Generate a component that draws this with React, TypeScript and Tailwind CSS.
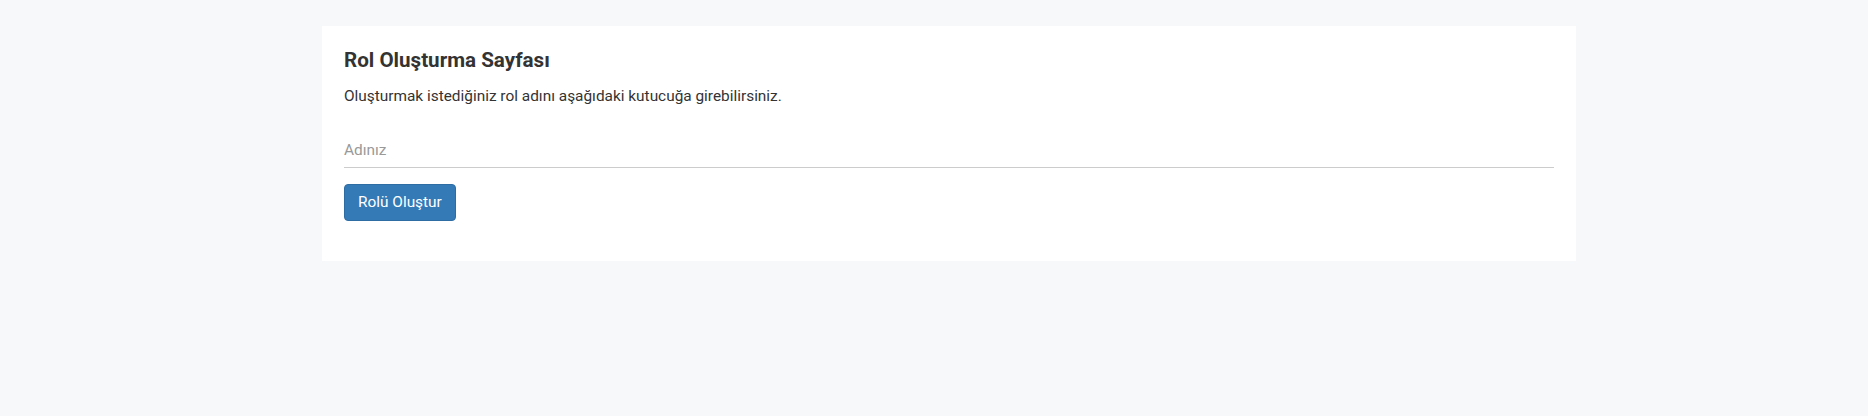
export default function App() {
  return (
    <div className="min-h-[416px] w-full bg-[#f7f8fa] pt-[26px] font-['Roboto',sans-serif] text-[#333]">
      <div className="ml-[322px] w-[1254px] bg-white px-[22px] pt-[20px] pb-[40px]">
        <h1 className="text-[20.6px] font-bold leading-[28px] text-[#333]">Rol Oluşturma Sayfası</h1>
        <p className="mt-[12px] text-[15.4px] leading-[20px]">
          Oluşturmak istediğiniz rol adını aşağıdaki kutucuğa girebilirsiniz.
        </p>
        <input
          type="text"
          placeholder="Adınız"
          className="mt-[26px] block h-[36px] w-full border-b border-[#cccccc] bg-transparent text-[15.4px] outline-none placeholder:text-[#999]"
        />
        <button className="mt-[16px] h-[37px] rounded-[4px] border border-[#2e6da4] bg-[#337ab7] px-[13px] text-[15.4px] text-white">
          Rolü Oluştur
        </button>
      </div>
    </div>
  );
}
